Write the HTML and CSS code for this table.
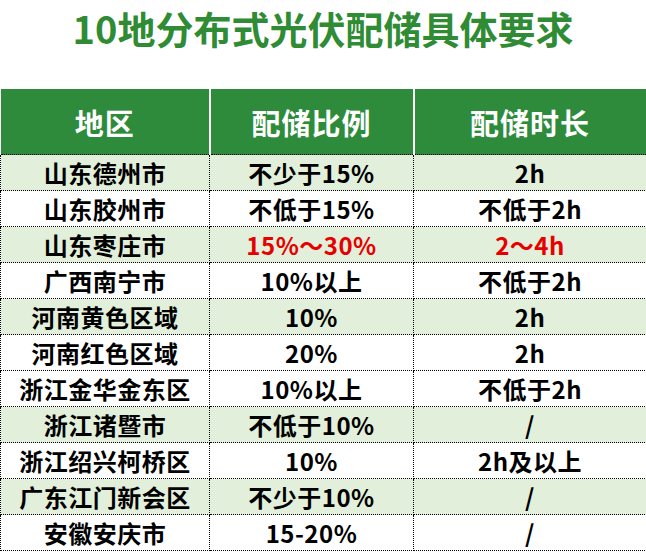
FILE: index.html
```html
<!DOCTYPE html>
<html lang="zh-CN">
<head>
<meta charset="utf-8">
<title>10地分布式光伏配储具体要求</title>
<link rel="stylesheet" href="styles.css">
</head>
<body>
<div class="page">
  <h1 class="title">10地分布式光伏配储具体要求</h1>
  <table class="grid">
    <colgroup>
      <col class="c1"><col class="c2"><col class="c3">
    </colgroup>
    <thead>
      <tr><th>地区</th><th>配储比例</th><th>配储时长</th></tr>
    </thead>
    <tbody>
      <tr class="tint"><td>山东德州市</td><td>不少于15%</td><td>2h</td></tr>
      <tr><td>山东胶州市</td><td>不低于15%</td><td>不低于2h</td></tr>
      <tr class="tint"><td>山东枣庄市</td><td class="red">15%～30%</td><td class="red">2～4h</td></tr>
      <tr><td>广西南宁市</td><td>10%以上</td><td>不低于2h</td></tr>
      <tr class="tint"><td>河南黄色区域</td><td>10%</td><td>2h</td></tr>
      <tr><td>河南红色区域</td><td>20%</td><td>2h</td></tr>
      <tr><td>浙江金华金东区</td><td>10%以上</td><td>不低于2h</td></tr>
      <tr class="tint"><td>浙江诸暨市</td><td>不低于10%</td><td>/</td></tr>
      <tr><td>浙江绍兴柯桥区</td><td>10%</td><td>2h及以上</td></tr>
      <tr class="tint"><td>广东江门新会区</td><td>不少于10%</td><td>/</td></tr>
      <tr><td>安徽安庆市</td><td>15-20%</td><td>/</td></tr>
    </tbody>
  </table>
</div>
</body>
</html>
```
FILE: styles.css
```css
html, body {
  margin: 0;
  padding: 0;
  background: #ffffff;
}
body {
  font-family: "Noto Sans CJK SC", "Noto Sans", "Liberation Sans", sans-serif;
  width: 646px;
}
.page {
  display: flex;
  flex-direction: column;
}
.title {
  margin: 0;
  height: 89px;
  box-sizing: border-box;
  padding-top: 1px;
  text-align: center;
  font-size: 38px;
  line-height: 54px;
  font-weight: 700;
  color: #2f8c34;
}
.grid {
  width: 646px;
  table-layout: fixed;
  border-collapse: collapse;
}
.c1 { width: 209px; }
.c2 { width: 204px; }
.c3 { width: 233px; }
.grid th {
  height: 65px;
  padding: 0;
  background: #2e8b3c;
  color: #ffffff;
  font-size: 29px;
  line-height: 36px;
  font-weight: 700;
  letter-spacing: 1px;
  text-align: center;
  vertical-align: middle;
  border-left: 2px solid #ffffff;
  border-bottom: 1px dotted #000;
}
.grid th:first-child {
  border-left: 1px solid #ffffff;
}
.grid th:last-child {
  border-right: 2px solid #ffffff;
}
.grid td {
  height: 35px;
  padding: 0;
  border: 1px dotted #000;
  text-align: center;
  vertical-align: middle;
  font-size: 24px;
  line-height: 30px;
  font-weight: 700;
  color: #000;
  letter-spacing: 0.5px;
}
.grid tr.tint td {
  background: #e2efda;
}
.grid td.red {
  color: #e60000;
}
```
